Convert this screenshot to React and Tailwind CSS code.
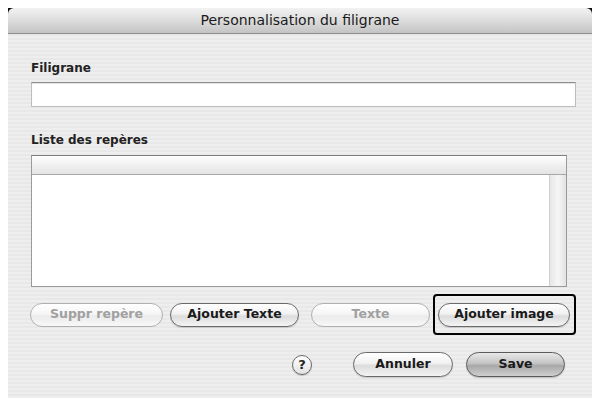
export default function App() {
  const font = { fontFamily: '"DejaVu Sans", "Liberation Sans", sans-serif' };
  const pill =
    "h-[24px] rounded-full border flex items-center justify-center text-[12.5px] font-bold shrink-0";
  const enabled =
    "border-[#6a6a6a] bg-[linear-gradient(#ffffff,#f1f1f1_45%,#dcdcdc_55%,#f4f4f4)] text-[#1a1a1a] shadow-[0_1px_1px_rgba(0,0,0,0.15)]";
  const disabled =
    "border-[#b0b0b0] bg-[linear-gradient(#ffffff,#f6f6f6_45%,#ebebeb_55%,#f8f8f8)] text-[#a0a0a0]";
  return (
    <div className="w-[596px] h-[398px] bg-white overflow-hidden" style={font}>
      <div className="ml-[8px] mt-[8px] w-[584px] h-[390px] flex flex-col bg-[repeating-linear-gradient(0deg,#eeeeee_0px,#eeeeee_2px,#e8e8e8_2px,#e8e8e8_4px)]">
        <div className="bg-[linear-gradient(90deg,#111_0px,#111_6px,transparent_6px,transparent_578px,#111_578px)]">
          <div className="h-[26px] rounded-t-[6px] flex items-center justify-center bg-[linear-gradient(#f2f2f2,#dcdcdc_50%,#c4c4c4)] border-b border-[#8c8c8c] text-[14px] text-[#1a1a1a]">
            Personnalisation du filigrane
          </div>
        </div>
        <div className="pl-[23px] pr-[16px] pt-[26px] flex flex-col">
          <div className="h-[16px] leading-[16px] text-[12px] font-bold text-[#222]">Filigrane</div>
          <div className="mt-[6px] h-[25px] w-[545px] bg-white border border-[#bdbdbd] border-t-[#8e8e8e] shadow-[inset_0_1px_1px_rgba(0,0,0,0.12)]" />
          <div className="mt-[25px] h-[16px] leading-[16px] text-[12px] font-bold text-[#222]">Liste des repères</div>
          <div className="mt-[7px] h-[132px] w-[536px] border border-[#9a9a9a] border-t-[#7e7e7e] bg-white flex flex-col">
            <div className="h-[19px] border-b border-[#a8a8a8] bg-[linear-gradient(#ffffff,#f0f0f0_50%,#e4e4e4)]" />
            <div className="flex-1 flex">
              <div className="flex-1" />
              <div className="w-[17px] border-l border-[#d0d0d0] bg-[linear-gradient(90deg,#e6e6e6,#f6f6f6_50%,#e2e2e2)]" />
            </div>
          </div>
        </div>
        <div className="mt-[7px] h-[41px] flex items-center pl-[22px]">
          <div className={`${pill} ${disabled} w-[133px]`}>Suppr repère</div>
          <div className={`${pill} ${enabled} w-[129px] ml-[7px]`}>Ajouter Texte</div>
          <div className={`${pill} ${disabled} w-[119px] ml-[12px]`}>Texte</div>
          <div className="ml-[3px] h-[41px] w-[143px] border-2 border-black rounded-[4px] flex items-center pl-[3px]">
            <div className={`${pill} ${enabled} w-[132px]`}>Ajouter image</div>
          </div>
        </div>
        <div className="mt-[17px] h-[25px] flex items-center pl-[284px]">
          <div className="w-[20px] h-[20px] rounded-full border border-[#6a6a6a] bg-[linear-gradient(#ffffff,#e2e2e2)] flex items-center justify-center text-[13px] font-bold text-[#222] leading-none shadow-[0_1px_1px_rgba(0,0,0,0.2)]">
            ?
          </div>
          <div className={`${pill} ${enabled} w-[100px] ml-[41px] h-[25px]`}>Annuler</div>
          <div className={`${pill} w-[99px] ml-[13px] h-[25px] border-[#5a5a5a] text-[#1a1a1a] bg-[linear-gradient(#e8e8e8,#c4c4c4_45%,#a8a8a8_55%,#cfcfcf)] shadow-[0_1px_1px_rgba(0,0,0,0.2)]`}>
            Save
          </div>
        </div>
      </div>
    </div>
  );
}
